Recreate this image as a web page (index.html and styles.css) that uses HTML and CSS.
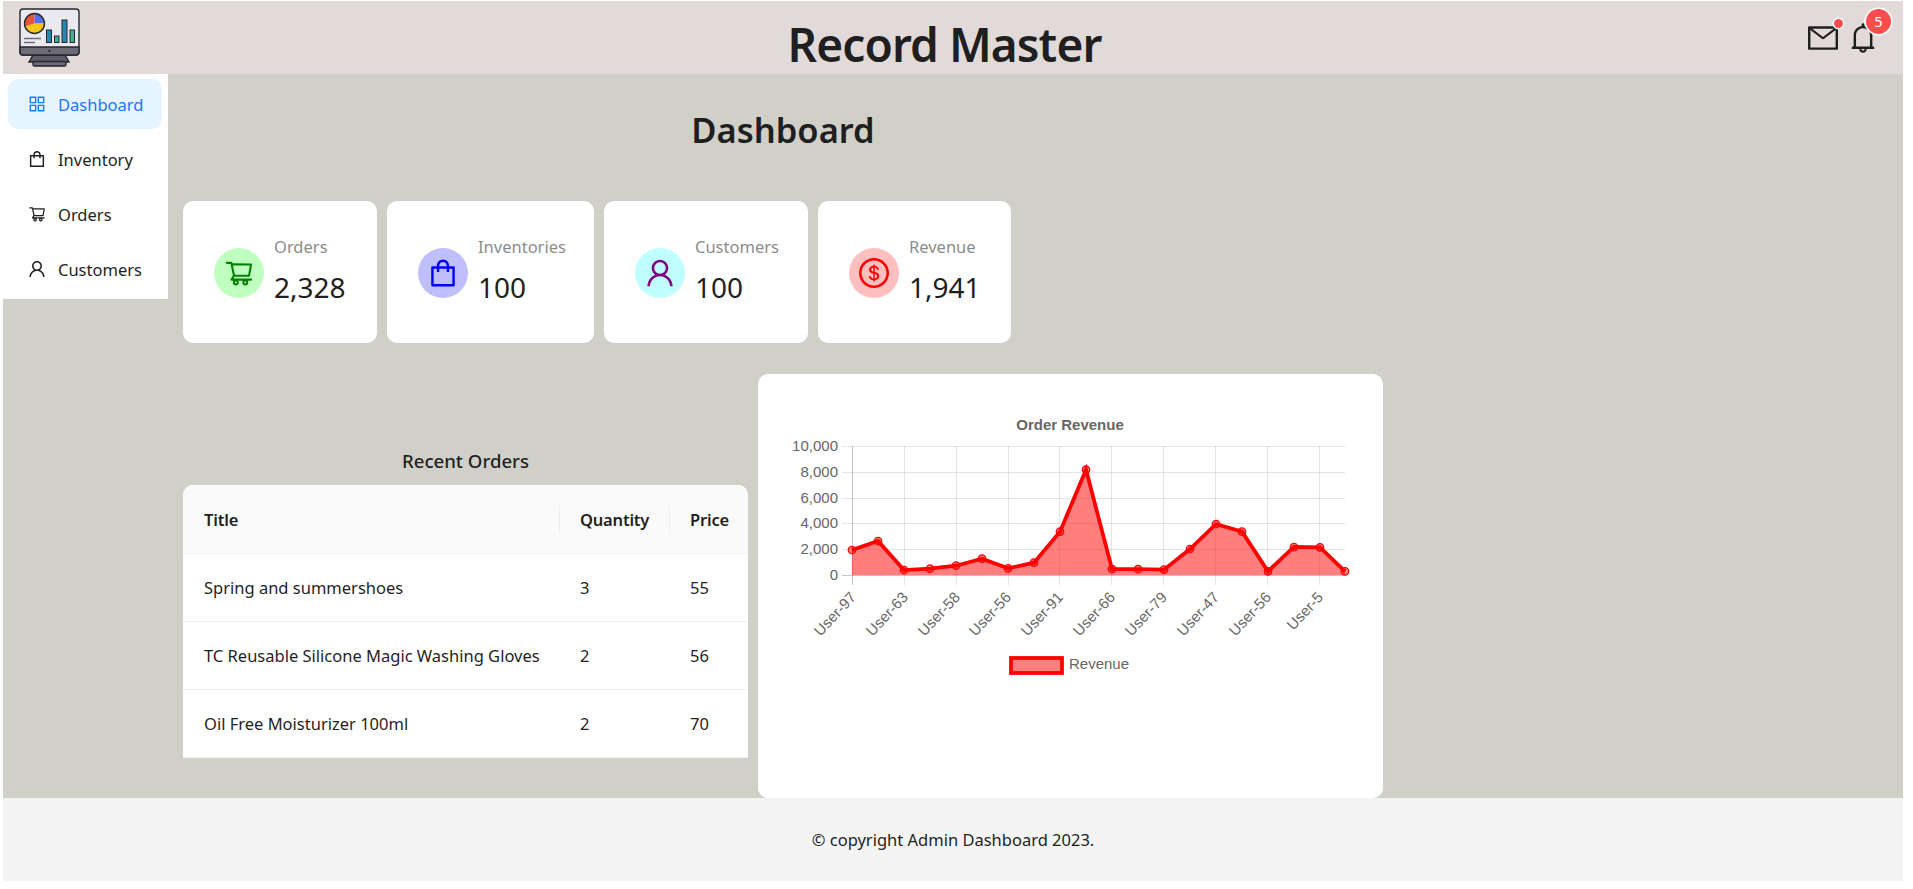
FILE: index.html
```html
<!DOCTYPE html>
<html lang="en">
<head>
  <meta charset="UTF-8">
  <title>Record Master</title>
  <link rel="stylesheet" href="styles.css">
</head>
<body>

  <svg class="sprite" xmlns="http://www.w3.org/2000/svg">
    <symbol id="i-grid" viewBox="64 64 896 896"><path d="M464 144H160c-8.8 0-16 7.2-16 16v304c0 8.8 7.2 16 16 16h304c8.8 0 16-7.2 16-16V160c0-8.8-7.2-16-16-16zm-52 268H212V212h200v200zm452-268H560c-8.8 0-16 7.2-16 16v304c0 8.8 7.2 16 16 16h304c8.8 0 16-7.2 16-16V160c0-8.8-7.2-16-16-16zm-52 268H612V212h200v200zM464 544H160c-8.8 0-16 7.2-16 16v304c0 8.8 7.2 16 16 16h304c8.8 0 16-7.2 16-16V560c0-8.8-7.2-16-16-16zm-52 268H212V612h200v200zm452-268H560c-8.8 0-16 7.2-16 16v304c0 8.8 7.2 16 16 16h304c8.8 0 16-7.2 16-16V560c0-8.8-7.2-16-16-16zm-52 268H612V612h200v200z"/></symbol>
    <symbol id="i-bag" viewBox="64 64 896 896"><path d="M832 312H696v-16c0-101.6-82.4-184-184-184s-184 82.4-184 184v16H192c-17.7 0-32 14.3-32 32v536c0 17.7 14.3 32 32 32h640c17.7 0 32-14.3 32-32V344c0-17.7-14.3-32-32-32zm-432-16c0-61.9 50.1-112 112-112s112 50.1 112 112v16H400v-16zm392 544H232V384h96v88c0 4.4 3.6 8 8 8h56c4.4 0 8-3.6 8-8v-88h224v88c0 4.4 3.6 8 8 8h56c4.4 0 8-3.6 8-8v-88h96v456z"/></symbol>
    <symbol id="i-cart" viewBox="0 0 1024 1024"><path d="M922.9 701.9H327.4l29.9-60.9 496.8-.9c16.8 0 31.2-12 34.2-28.6l68.8-385.1c1.8-10.1-.9-20.5-7.5-28.4a34.99 34.99 0 00-26.6-12.5l-632-2.1-5.4-25.4c-3.4-16.2-18-28-34.6-28H96.5a35.3 35.3 0 100 70.6h125.9L246 312.8l58.1 281.3-74.8 122.1a34.96 34.96 0 00-3 36.8c6 11.9 18.1 19.4 31.5 19.4h62.8a102.43 102.43 0 00-20.6 61.7c0 56.6 46 102.6 102.6 102.6s102.6-46 102.6-102.6c0-22.3-7.4-44-20.6-61.7h161.1a102.43 102.43 0 00-20.6 61.7c0 56.6 46 102.6 102.6 102.6s102.6-46 102.6-102.6c0-22.3-7.4-44-20.6-61.7H923c19.4 0 35.3-15.8 35.3-35.3a35.42 35.42 0 00-35.4-35.2zM305.7 253l575.8 1.9-56.4 315.8-452.3.8L305.7 253zm96.9 612.7c-17.4 0-31.6-14.2-31.6-31.6 0-17.4 14.2-31.6 31.6-31.6s31.6 14.2 31.6 31.6a31.6 31.6 0 01-31.6 31.6zm325.1 0c-17.4 0-31.6-14.2-31.6-31.6 0-17.4 14.2-31.6 31.6-31.6s31.6 14.2 31.6 31.6a31.6 31.6 0 01-31.6 31.6z"/></symbol>
    <symbol id="i-user" viewBox="64 64 896 896"><path d="M858.5 763.6a374 374 0 00-80.6-119.5 375.63 375.63 0 00-119.5-80.6c-.4-.2-.8-.3-1.2-.5C719.5 518 760 444.7 760 362c0-137-111-248-248-248S264 225 264 362c0 82.7 40.5 156 102.8 201.1-.4.2-.8.3-1.2.5-44.8 18.9-85 46-119.5 80.6a375.63 375.63 0 00-80.6 119.5A371.7 371.7 0 00136 901.8a8 8 0 008 8.2h60c4.4 0 7.9-3.5 8-7.8 2-77.2 33-149.5 87.8-204.3 56.7-56.7 132-87.9 212.2-87.9s155.5 31.2 212.2 87.9C779 752.7 810 825 812 902.2c.1 4.4 3.6 7.8 8 7.8h60a8 8 0 008-8.2c-1-47.8-10.9-94.3-29.5-138.2zM512 534c-45.9 0-89.1-17.9-121.6-50.4S340 407.9 340 362c0-45.9 17.9-89.1 50.4-121.6S466.1 190 512 190s89.1 17.9 121.6 50.4S684 316.1 684 362c0 45.9-17.9 89.1-50.4 121.6S557.9 534 512 534z"/></symbol>
    <symbol id="i-dollar" viewBox="64 64 896 896"><path d="M512 64C264.6 64 64 264.6 64 512s200.6 448 448 448 448-200.6 448-448S759.4 64 512 64zm0 820c-205.4 0-372-166.6-372-372s166.6-372 372-372 372 166.6 372 372-166.6 372-372 372zm47.7-395.2l-25.4-5.9V348.6c38 5.2 61.5 29 65.5 58.2.5 4 3.9 6.9 7.9 6.9h44.9c4.7 0 8.4-4.1 8-8.8-6.1-62.3-57.4-102.3-125.9-109.2V263c0-4.4-3.6-8-8-8h-28.1c-4.4 0-8 3.6-8 8v33c-70.8 6.9-126.2 46-126.2 119 0 67.6 49.8 100.2 102.1 112.7l24.7 6.3v142.7c-44.2-5.9-69-29.5-74.1-61.3-.6-3.8-4-6.6-7.9-6.6H363c-4.7 0-8.4 4-8 8.7 4.5 55 46.2 105.6 135.2 112.1V761c0 4.4 3.6 8 8 8h28.4c4.4 0 8-3.6 8-8.1l-.2-31.7c78.3-6.9 134.3-48.8 134.3-124-.1-69.4-44.2-100.4-109-116.4zm-68.6-16.2c-5.6-1.6-10.3-3.1-15-5-33.8-12.2-49.5-31.9-49.5-57.3 0-36.3 27.5-57 64.5-61.7v124zM534.3 677V543.3c3.1.9 5.9 1.6 8.8 2.2 47.3 14.4 63.2 34.4 63.2 65.1 0 39.1-29.4 62.6-72 66.4z"/></symbol>
    <symbol id="i-mail" viewBox="64 64 896 896"><path d="M928 160H96c-17.7 0-32 14.3-32 32v640c0 17.7 14.3 32 32 32h832c17.7 0 32-14.3 32-32V192c0-17.7-14.3-32-32-32zm-40 110.8V792H136V270.8l-27.6-21.5 39.3-50.5 42.8 33.3h643.1l42.8-33.3 39.3 50.5-27.7 21.5zM833.6 232L512 482 190.4 232l-42.8-33.3-39.3 50.5 27.6 21.5 341.6 265.6a55.99 55.99 0 0068.7 0L888 270.8l27.6-21.5-39.3-50.5-42.7 33.2z"/></symbol>
    <symbol id="i-bell" viewBox="64 64 896 896"><path d="M816 768h-24V428c0-141.1-104.3-257.7-240-277.1V112c0-22.1-17.9-40-40-40s-40 17.9-40 40v38.9c-135.7 19.4-240 136-240 277.1v340h-24c-17.7 0-32 14.3-32 32v32c0 4.4 3.6 8 8 8h216c0 61.8 50.2 112 112 112s112-50.2 112-112h216c4.4 0 8-3.6 8-8v-32c0-17.7-14.3-32-32-32zM512 888c-26.5 0-48-21.5-48-48h96c0 26.5-21.5 48-48 48zM304 768V428c0-55.6 21.6-107.8 60.9-147.1S456.4 220 512 220c55.6 0 107.8 21.6 147.1 60.9S720 372.4 720 428v340H304z"/></symbol>
  </svg>

  <header class="top-bar">
    <svg class="logo" viewBox="18 7 63 61" xmlns="http://www.w3.org/2000/svg">
      <path d="M29 62 L33 55 H65 L69 62 Z" fill="#5e5c68" stroke="#26262c" stroke-width="1.4"/>
      <rect x="33" y="61.5" width="33" height="4.5" rx="1.5" fill="#6d6b78" stroke="#26262c" stroke-width="1.4"/>
      <rect x="20" y="9" width="59" height="46" rx="3" fill="#e9eaf0" stroke="#26262c" stroke-width="1.4"/>
      <path d="M20 47 H79 V52 a3 3 0 0 1 -3 3 H23 a3 3 0 0 1 -3 -3 Z" fill="#6d6b78" stroke="#26262c" stroke-width="1.4"/>
      <circle cx="49.5" cy="51" r="1" fill="#1d1d22"/>
      <path d="M34.5 23.5 V13.5 A10 10 0 0 0 25 26.6 Z" fill="#e8553f"/>
      <path d="M34.5 23.5 V13.5 A10 10 0 0 1 44.5 23.5 Z" fill="#5b6ee8"/>
      <path d="M34.5 23.5 H44.5 A10 10 0 0 1 25 26.6 Z" fill="#f5c518"/>
      <circle cx="34.5" cy="23.5" r="10" fill="none" stroke="#26262c" stroke-width="1.4"/>
      <rect x="46.5" y="30" width="5" height="12.5" fill="#2a86b0" stroke="#26262c"/>
      <rect x="54.5" y="36" width="4.5" height="6.5" fill="#3cb39a" stroke="#26262c"/>
      <rect x="62" y="20" width="5" height="22.5" fill="#2a86b0" stroke="#26262c"/>
      <rect x="70" y="30" width="4.5" height="12.5" fill="#3cb39a" stroke="#26262c"/>
      <path d="M24 38.5 H41 M24 42.5 H35" stroke="#6d6b78" stroke-width="1.6"/>
    </svg>
    <h1 class="app-title">Record Master</h1>
    <div class="top-icons">
      <span class="top-icon">
        <svg class="icon-30"><use href="#i-mail"/></svg>
        <span class="dot"></span>
      </span>
      <span class="top-icon">
        <svg class="icon-30"><use href="#i-bell"/></svg>
        <span class="badge">5</span>
      </span>
    </div>
  </header>

  <div class="main">
    <nav class="side-menu">
      <a class="menu-item active"><svg class="icon-menu"><use href="#i-grid"/></svg>Dashboard</a>
      <a class="menu-item"><svg class="icon-menu"><use href="#i-bag"/></svg>Inventory</a>
      <a class="menu-item"><svg class="icon-menu"><use href="#i-cart"/></svg>Orders</a>
      <a class="menu-item"><svg class="icon-menu"><use href="#i-user"/></svg>Customers</a>
    </nav>

    <section class="content">
      <h2 class="page-title">Dashboard</h2>

      <div class="stats">
        <div class="stat-card">
          <span class="stat-icon green"><svg class="icon-30"><use href="#i-cart"/></svg></span>
          <div class="stat-text">
            <div class="stat-label">Orders</div>
            <div class="stat-value">2,328</div>
          </div>
        </div>
        <div class="stat-card">
          <span class="stat-icon blue"><svg class="icon-30"><use href="#i-bag"/></svg></span>
          <div class="stat-text">
            <div class="stat-label">Inventories</div>
            <div class="stat-value">100</div>
          </div>
        </div>
        <div class="stat-card">
          <span class="stat-icon cyan"><svg class="icon-30"><use href="#i-user"/></svg></span>
          <div class="stat-text">
            <div class="stat-label">Customers</div>
            <div class="stat-value">100</div>
          </div>
        </div>
        <div class="stat-card">
          <span class="stat-icon red"><svg class="icon-30"><use href="#i-dollar"/></svg></span>
          <div class="stat-text">
            <div class="stat-label">Revenue</div>
            <div class="stat-value">1,941</div>
          </div>
        </div>
      </div>

      <div class="lower">
        <div class="recent">
          <h3 class="recent-title">Recent Orders</h3>
          <table class="orders-table">
            <thead>
              <tr><th class="col-title">Title</th><th class="col-qty">Quantity</th><th class="col-price">Price</th></tr>
            </thead>
            <tbody>
              <tr><td>Spring and summershoes</td><td>3</td><td>55</td></tr>
              <tr><td>TC Reusable Silicone Magic Washing Gloves</td><td>2</td><td>56</td></tr>
              <tr><td>Oil Free Moisturizer 100ml</td><td>2</td><td>70</td></tr>
            </tbody>
          </table>
        </div>

        <div class="chart-card">
          <svg class="chart" viewBox="758 400 625 290" xmlns="http://www.w3.org/2000/svg">
            <text class="chart-title" x="1070" y="430" text-anchor="middle">Order Revenue</text>

            <g class="grid">
              <path d="M842 446.5H1345M842 472.5H1345M842 498.5H1345M842 523.5H1345M842 549.5H1345"/>
              <path d="M904.5 446V585M956.5 446V585M1008.5 446V585M1059.5 446V585M1111.5 446V585M1163.5 446V585M1215.5 446V585M1267.5 446V585M1319.5 446V585"/>
            </g>
            <path class="axis" d="M842 575.5H1345M852.5 446V585"/>

            <g class="tick-y" text-anchor="end">
              <text x="838" y="451">10,000</text>
              <text x="838" y="477">8,000</text>
              <text x="838" y="503">6,000</text>
              <text x="838" y="528">4,000</text>
              <text x="838" y="554">2,000</text>
              <text x="838" y="580">0</text>
            </g>

            <polygon class="area" points="852,575 852,550 878,541 904,570 930,568.7 956,565.7 982,558.7 1008,568.3 1034,562.7 1060,531.7 1086,469.7 1112,569 1138,569 1164,569.7 1190,549 1216,524 1242,531.7 1268,571.3 1294,547 1320,547.3 1345,571.3 1345,575"/>
            <polyline class="line" points="852,550 878,541 904,570 930,568.7 956,565.7 982,558.7 1008,568.3 1034,562.7 1060,531.7 1086,469.7 1112,569 1138,569 1164,569.7 1190,549 1216,524 1242,531.7 1268,571.3 1294,547 1320,547.3 1345,571.3"/>
            <g class="points">
              <circle cx="852" cy="550" r="3.75"/><circle cx="878" cy="541" r="3.75"/><circle cx="904" cy="570" r="3.75"/><circle cx="930" cy="568.7" r="3.75"/>
              <circle cx="956" cy="565.7" r="3.75"/><circle cx="982" cy="558.7" r="3.75"/><circle cx="1008" cy="568.3" r="3.75"/><circle cx="1034" cy="562.7" r="3.75"/>
              <circle cx="1060" cy="531.7" r="3.75"/><circle cx="1086" cy="469.7" r="3.75"/><circle cx="1112" cy="569" r="3.75"/><circle cx="1138" cy="569" r="3.75"/>
              <circle cx="1164" cy="569.7" r="3.75"/><circle cx="1190" cy="549" r="3.75"/><circle cx="1216" cy="524" r="3.75"/><circle cx="1242" cy="531.7" r="3.75"/>
              <circle cx="1268" cy="571.3" r="3.75"/><circle cx="1294" cy="547" r="3.75"/><circle cx="1320" cy="547.3" r="3.75"/><circle cx="1345" cy="571.3" r="3.75"/>
            </g>

            <g class="tick-x" text-anchor="end">
              <text transform="translate(857 598) rotate(-47)">User-97</text>
              <text transform="translate(909 598) rotate(-47)">User-63</text>
              <text transform="translate(961 598) rotate(-47)">User-58</text>
              <text transform="translate(1012 598) rotate(-47)">User-56</text>
              <text transform="translate(1064 598) rotate(-47)">User-91</text>
              <text transform="translate(1116 598) rotate(-47)">User-66</text>
              <text transform="translate(1168 598) rotate(-47)">User-79</text>
              <text transform="translate(1220 598) rotate(-47)">User-47</text>
              <text transform="translate(1272 598) rotate(-47)">User-56</text>
              <text transform="translate(1324 598) rotate(-47)">User-5</text>
            </g>

            <rect class="legend-box" x="1011" y="658" width="51" height="15"/>
            <text class="legend-text" x="1069" y="669">Revenue</text>
          </svg>
        </div>
      </div>
    </section>
  </div>

  <footer class="foot">© copyright Admin Dashboard 2023.</footer>

</body>
</html>
```

FILE: styles.css
```css
body {
  margin: 1px 10px 8px 3px;
  font-family: "Noto Sans", "Open Sans", Arial, sans-serif;
  font-size: 16.5px;
  color: #1f1f1f;
  background-color: #fff;
}

.sprite { display: none; }
svg { fill: currentColor; }
.icon-30 { width: 30px; height: 30px; display: block; }
.icon-menu { width: 18px; height: 18px; margin-right: 12px; flex: none; }

/* top bar */
.top-bar {
  height: 73px;
  display: flex;
  align-items: center;
  justify-content: space-between;
  padding: 0 25px 0 15px;
  background-color: #e1dad9;
}
.logo { width: 63px; height: 61px; }
.app-title {
  margin: 0;
  padding-top: 13px;
  font-size: 46px;
  letter-spacing: -0.9px;
  line-height: 60px;
  font-weight: 600;
}
.top-icons { display: flex; gap: 10px; }
.top-icon { position: relative; display: block; }
.dot {
  position: absolute;
  top: -4px;
  right: -5px;
  width: 9px;
  height: 9px;
  border-radius: 50%;
  background-color: #ff4d4f;
  box-shadow: 0 0 0 1.5px #fff;
}
.badge {
  position: absolute;
  top: -14px;
  right: -13px;
  width: 25px;
  height: 25px;
  border-radius: 50%;
  background-color: #ff4d4f;
  box-shadow: 0 0 0 1.5px #fff;
  color: #fff;
  font-size: 14.5px;
  line-height: 25px;
  text-align: center;
}

/* middle */
.main {
  height: 724px;
  display: flex;
  align-items: flex-start;
  background-color: #d1d0c8;
}
.side-menu {
  width: 165px;
  box-sizing: border-box;
  padding: 5px 6px 5px 5px;
  display: flex;
  flex-direction: column;
  gap: 5px;
  background-color: #fff;
}
.menu-item {
  height: 50px;
  display: flex;
  align-items: center;
  padding-left: 20px;
  border-radius: 10px;
}
.menu-item.active { background-color: #e6f4ff; color: #1677ff; }

.content { width: 1200px; margin-left: 15px; }
.page-title {
  margin: 0;
  padding-top: 30px;
  height: 96px;
  box-sizing: border-box;
  text-align: center;
  font-size: 34.5px;
  line-height: 52px;
  font-weight: 600;
}

.stats {
  margin-top: 31px;
  display: grid;
  grid-template-columns: 194px 207px 204px 193px;
  gap: 10px;
}
.stat-card {
  height: 142px;
  display: flex;
  align-items: center;
  gap: 10px;
  padding-left: 31px;
  background-color: #fff;
  border-radius: 10px;
}
.stat-icon {
  width: 50px;
  height: 50px;
  margin-top: 2px;
  border-radius: 50%;
  display: flex;
  align-items: center;
  justify-content: center;
}
.stat-icon.green { background-color: #bfffbf; color: #008000; }
.stat-icon.blue { background-color: #bfbfff; color: #0000ff; }
.stat-icon.cyan { background-color: #bfffff; color: #800080; }
.stat-icon.red { background-color: #ffbfbf; color: #ff0000; }
.stat-text { padding-bottom: 4px; }
.stat-label { color: #8c8c8c; line-height: 28px; }
.stat-value { font-size: 28px; line-height: 42px; margin-top: 5px; }

.lower { margin-top: 31px; display: flex; align-items: flex-start; gap: 10px; }
.recent { width: 565px; margin-top: 75px; }
.recent-title {
  margin: 0 0 12px;
  text-align: center;
  font-size: 18.6px;
  line-height: 24px;
  font-weight: 500;
}
.orders-table {
  width: 100%;
  table-layout: fixed;
  border-collapse: separate;
  border-spacing: 0;
  background-color: #fff;
  border-radius: 10px 10px 0 0;
}
.orders-table th, .orders-table td {
  box-sizing: border-box;
  padding: 0 0 0 21px;
  height: 68px;
  text-align: left;
  border-bottom: 1px solid #f0f0f0;
}
.orders-table th {
  position: relative;
  height: 69px;
  font-weight: 600;
  letter-spacing: -0.2px;
  background-color: #fafafa;
}
.orders-table th:first-child { border-top-left-radius: 10px; }
.orders-table th:last-child { border-top-right-radius: 10px; }
.orders-table th + th::before {
  content: "";
  position: absolute;
  left: 0;
  top: 20px;
  height: 28px;
  width: 1px;
  background-color: #f0f0f0;
}
.col-title { width: 376px; }
.col-qty { width: 110px; }
.col-price { width: 79px; }

.chart-card {
  width: 625px;
  height: 424px;
  box-sizing: border-box;
  padding-top: 26px;
  background-color: #fff;
  border-radius: 10px;
}
.chart { display: block; width: 625px; height: 290px; font-family: "Liberation Sans", Arial, sans-serif; }
.chart-title { font-size: 15px; font-weight: 700; fill: #666; }
.grid path { fill: none; stroke: rgba(0, 0, 0, 0.1); stroke-width: 1; }
.axis { fill: none; stroke: rgba(0, 0, 0, 0.22); stroke-width: 1; }
.tick-y text, .tick-x text, .legend-text { font-size: 15px; fill: #666; }
.area { fill: rgba(255, 0, 0, 0.5); stroke: none; }
.line { fill: none; stroke: #ff0000; stroke-width: 3.75; }
.points circle { fill: rgba(255, 0, 0, 0.5); stroke: #ff0000; stroke-width: 1.25; }
.legend-box { fill: rgba(255, 0, 0, 0.5); stroke: #ff0000; stroke-width: 3.75; }

.foot {
  height: 83px;
  display: flex;
  align-items: center;
  justify-content: center;
  background-color: #f4f4f4;
}
```
